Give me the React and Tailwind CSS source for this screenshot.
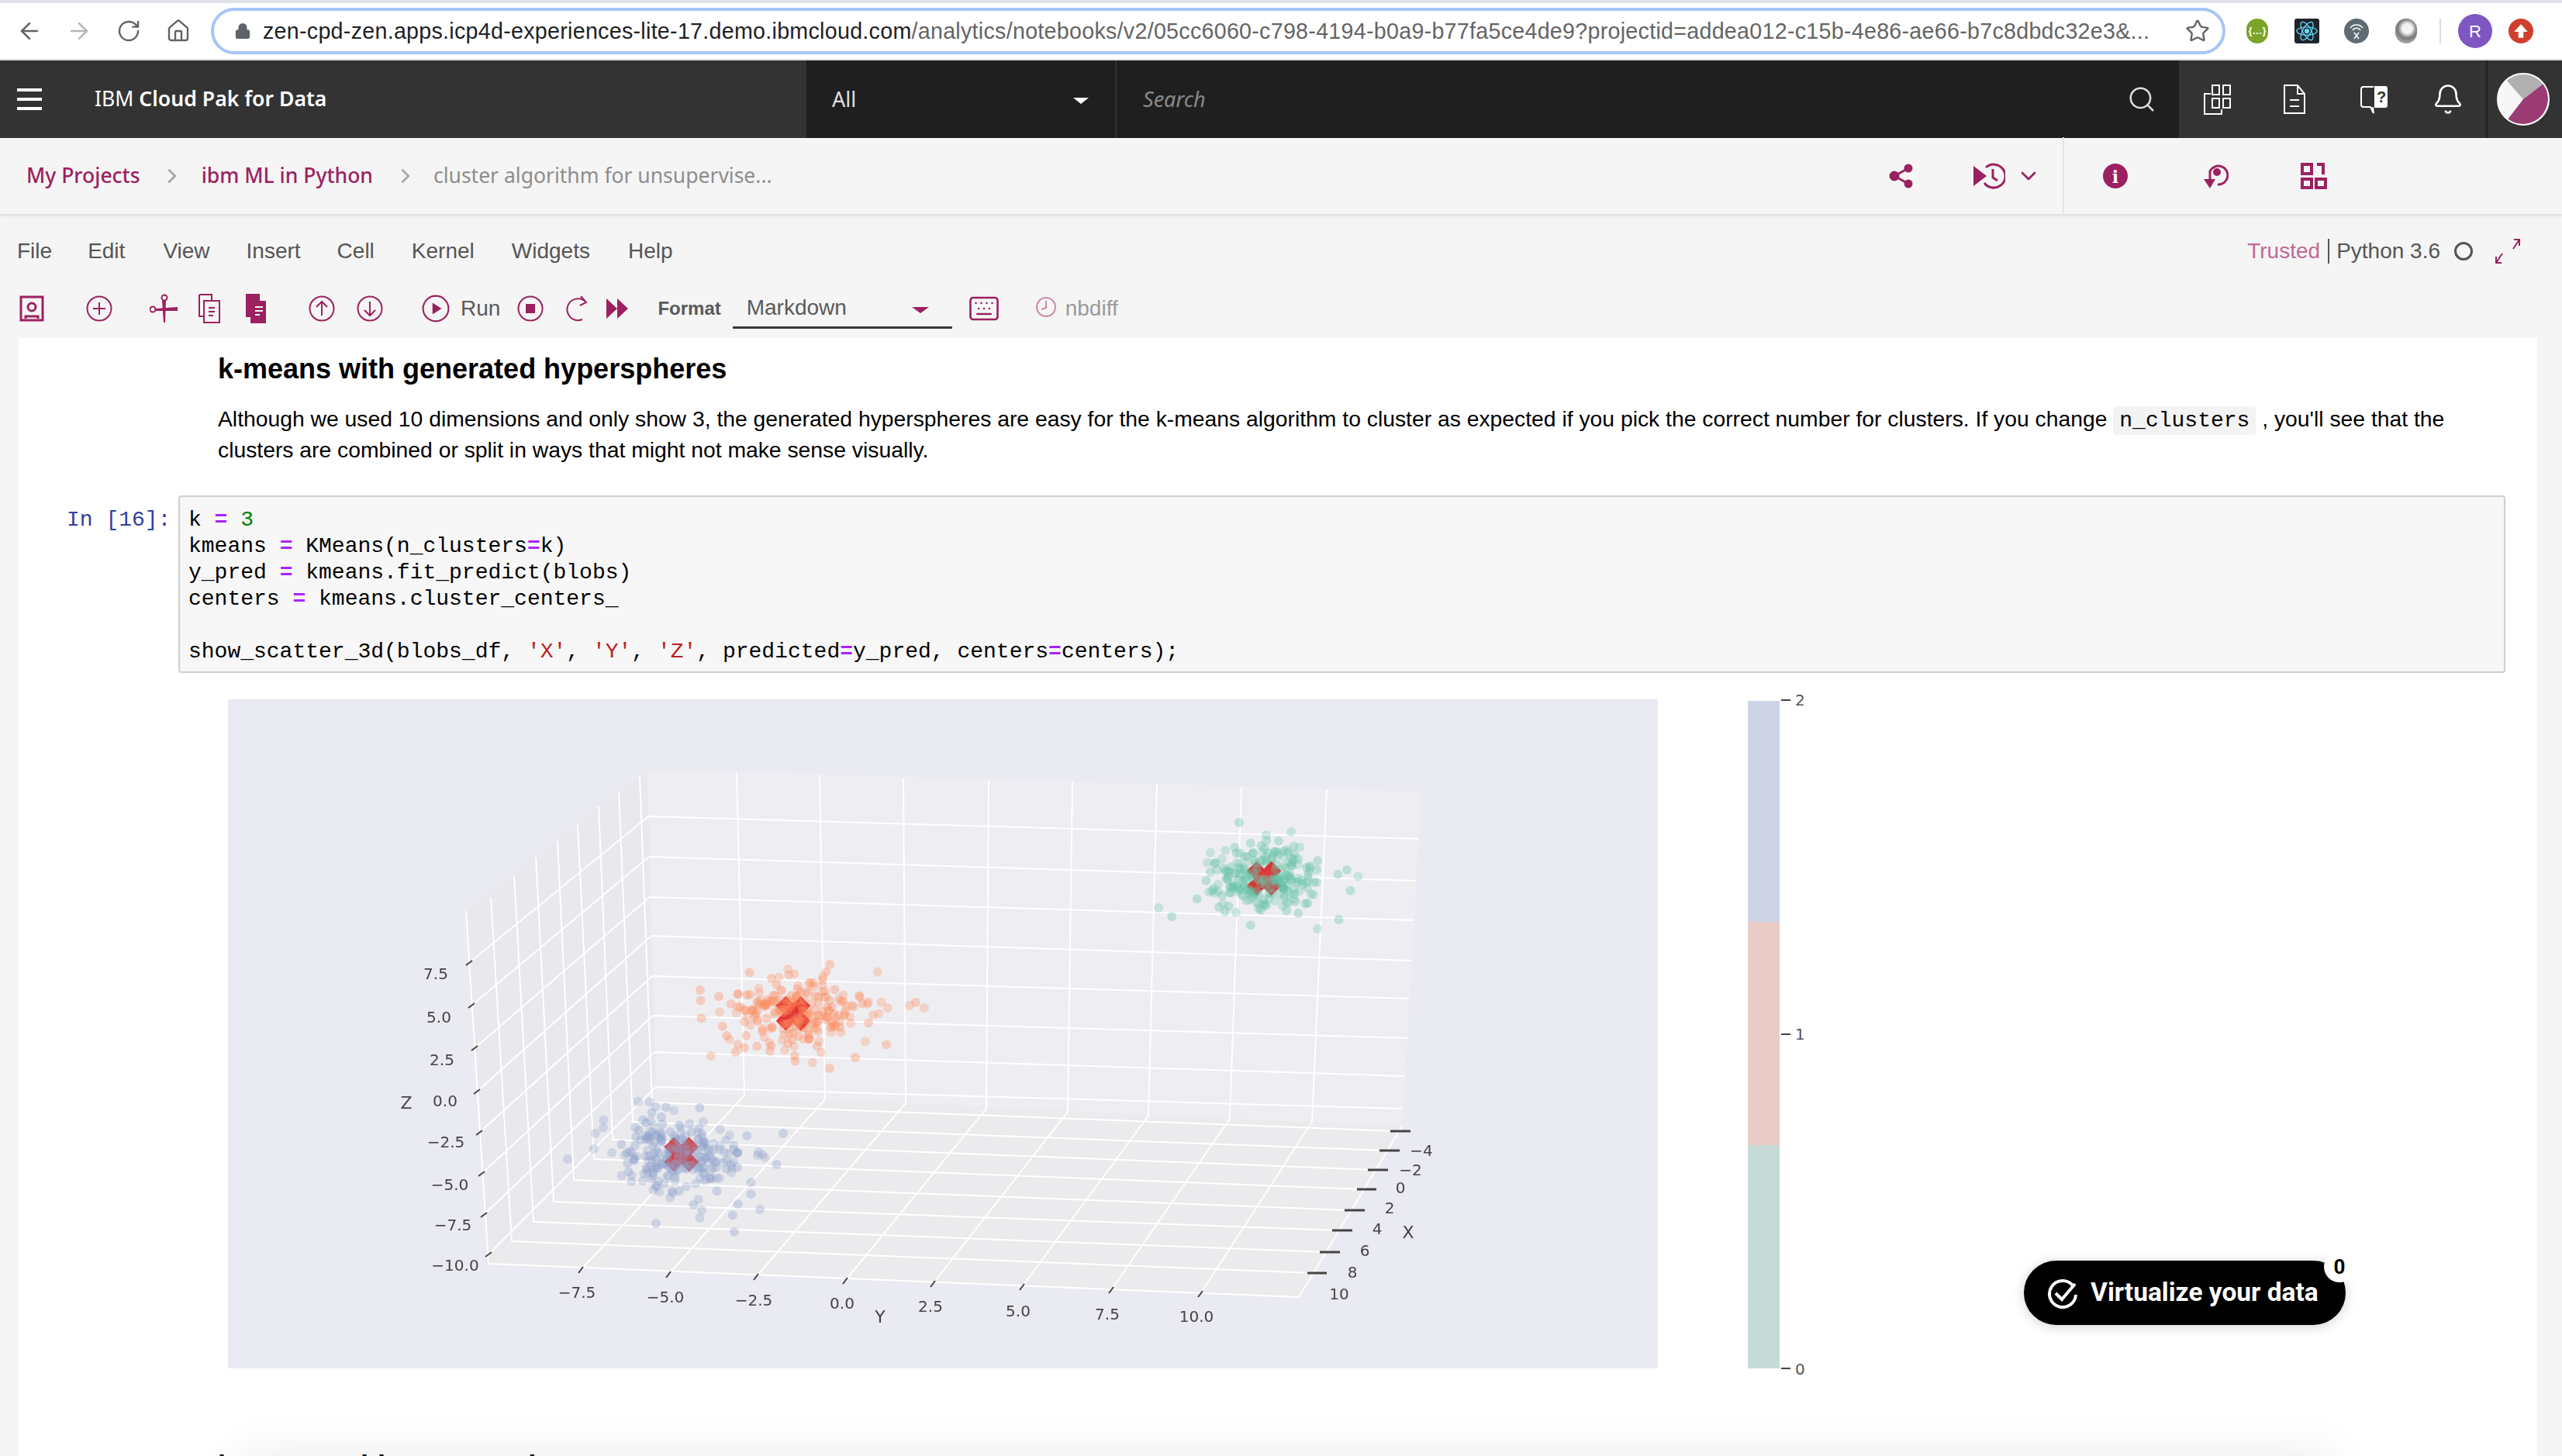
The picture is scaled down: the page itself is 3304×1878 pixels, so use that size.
import { ArrowLeft, ArrowRight, RotateCw, Home, Lock, Star, Search, Bell, ChevronRight, ChevronDown, Keyboard } from 'lucide-react'

// plot geometry, in page pixels
const wallHoriz = [
  [605, 1242, 836, 1053, 1829, 1082], [608, 1297, 837, 1105, 1825, 1136],
  [612, 1352, 838, 1157, 1822, 1187], [615, 1408, 840, 1207, 1820, 1239],
  [618, 1461, 841, 1259, 1817, 1288], [621, 1514, 842, 1310, 1815, 1339],
  [624, 1567, 844, 1357, 1811, 1388], [630, 1618, 846, 1402, 1808, 1430],
]
const leftVert = [
  [825, 1001, 841, 1422], [798, 1021, 816, 1447], [772, 1040, 790, 1470], [745, 1063, 766, 1495],
  [719, 1085, 740, 1522], [691, 1106, 714, 1550], [663, 1129, 688, 1576], [633, 1158, 660, 1601],
]
const floorX = [
  [1803, 1459], [1787, 1484], [1772, 1509], [1756, 1534], [1741, 1561], [1726, 1587], [1710, 1615], [1694, 1642],
]
const backVert = [
  [950, 997, 960, 1413, 749, 1638], [1057, 1000, 1064, 1418, 862, 1644], [1165, 1003, 1168, 1423, 975, 1647],
  [1275, 1006, 1272, 1430, 1090, 1652], [1383, 1009, 1377, 1434, 1203, 1656], [1492, 1012, 1481, 1439, 1318, 1660],
  [1601, 1015, 1586, 1443, 1433, 1664], [1711, 1018, 1692, 1447, 1548, 1669],
]
const zLabels = [['7.5', 562, 1256], ['5.0', 566, 1312], ['2.5', 570, 1367], ['0.0', 574, 1420], ['−2.5', 575, 1473], ['−5.0', 580, 1528], ['−7.5', 584, 1580], ['−10.0', 587, 1632]]
const yLabels = [['−7.5', 744, 1667], ['−5.0', 858, 1673], ['−2.5', 972, 1677], ['0.0', 1086, 1681], ['2.5', 1200, 1685], ['5.0', 1313, 1691], ['7.5', 1428, 1695], ['10.0', 1543, 1698]]
const xLabels = [['−4', 1833, 1484], ['−2', 1819, 1509], ['0', 1806, 1532], ['2', 1792, 1558], ['4', 1776, 1585], ['6', 1760, 1613], ['8', 1744, 1641], ['10', 1727, 1669]]
const xTicks = [[1793, 1819, 1459], [1779, 1805, 1484], [1764, 1790, 1509], [1750, 1775, 1534], [1734, 1760, 1561], [1718, 1744, 1587], [1702, 1728, 1615], [1686, 1711, 1642]]

function cloud(seed, n, cx, cy, sx, sy) {
  let s = seed
  const rnd = () => {
    s = (s * 1664525 + 1013904223) % 4294967296
    return s / 4294967296
  }
  const pts = []
  for (let i = 0; i < n; i++) {
    const r = Math.sqrt(-2 * Math.log(rnd() + 0.0001))
    const t = rnd() * Math.PI * 2
    pts.push([cx + Math.cos(t) * r * sx, cy + Math.sin(t) * r * sy])
  }
  return pts
}

const clusters = [
  { color: '#8da0cb', c: [879, 1489], pts: [...cloud(11, 240, 879, 1489, 45, 28), [732, 1495], [1010, 1462], [980, 1560], [846, 1578]] },
  { color: '#fc8d62', c: [1023, 1307], pts: [...cloud(29, 240, 1023, 1307, 46, 26), [1173, 1297], [1181, 1293], [1192, 1300], [1103, 1364], [917, 1362]] },
  { color: '#66c2a5', c: [1630, 1133], pts: [...cloud(47, 240, 1630, 1133, 38, 24), [1494, 1171], [1598, 1061], [1665, 1073], [1737, 1122], [1699, 1198]] },
]

function Scatter() {
  return (
    <svg viewBox="294 902 1844 863" className="w-[1844px] h-[863px] shrink-0 blur-[0.6px]">
      <rect x="294" y="902" width="1844" height="863" fill="#eaeaf2" />
      <polygon points="601,1175 835,993 846,1408 630,1630" fill="#e8e8ed" />
      <polygon points="835,993 1833,1021 1808,1453 846,1408" fill="#eeeef2" />
      <polygon points="846,1408 1808,1453 1675,1673 630,1630" fill="#ebebee" />
      <g stroke="#ffffff" strokeWidth="2" fill="none">
        <path d="M601 1175 L630 1630 L1675 1673 L1808 1453" />
        {wallHoriz.map((l, i) => <path key={i} d={`M${l[0]} ${l[1]} L${l[2]} ${l[3]} L${l[4]} ${l[5]}`} />)}
        {leftVert.map((l, i) => <line key={i} x1={l[0]} y1={l[1]} x2={l[2]} y2={l[3]} />)}
        {leftVert.map((l, i) => <line key={i} x1={l[2]} y1={l[3]} x2={floorX[i][0]} y2={floorX[i][1]} />)}
        {backVert.map((l, i) => <path key={i} d={`M${l[0]} ${l[1]} L${l[2]} ${l[3]} L${l[4]} ${l[5]}`} />)}
      </g>
      <g stroke="#444444" strokeWidth="2">
        {wallHoriz.map((l, i) => <line key={i} x1={l[0] - 4} y1={l[1] + 3} x2={l[0] + 4} y2={l[1] - 3} />)}
        {backVert.map((l, i) => <line key={i} x1={l[4] - 3} y1={l[5] + 4} x2={l[4] + 3} y2={l[5] - 4} />)}
        {xTicks.map((t, i) => <line key={i} x1={t[0]} y1={t[2]} x2={t[1]} y2={t[2]} strokeWidth="3" />)}
      </g>
      {clusters.map((cl, i) => (
        <g key={i}>
          <g fill={cl.color} fillOpacity="0.3">
            {cl.pts.filter((_, j) => j % 2 === 0).map((p, j) => <circle key={j} cx={p[0]} cy={p[1]} r="6" />)}
          </g>
          <g stroke="#e01b1b" strokeOpacity="0.85" strokeWidth="18">
            <path d={`M${cl.c[0] - 16} ${cl.c[1] - 16} L${cl.c[0] + 16} ${cl.c[1] + 16} M${cl.c[0] - 16} ${cl.c[1] + 16} L${cl.c[0] + 16} ${cl.c[1] - 16}`} />
          </g>
          <g fill={cl.color} fillOpacity="0.36">
            {cl.pts.filter((_, j) => j % 2 === 1).map((p, j) => <circle key={j} cx={p[0]} cy={p[1]} r="6" />)}
          </g>
        </g>
      ))}
      <g fill="#444444" fontSize="20" fontFamily="'DejaVu Sans', sans-serif" textAnchor="middle" dominantBaseline="central">
        {[...zLabels, ...yLabels, ...xLabels].map(([t, x, y]) => <text key={t + x} x={x} y={y}>{t}</text>)}
        <text x="524" y="1422" fontSize="22">Z</text>
        <text x="1135" y="1698" fontSize="22">Y</text>
        <text x="1816" y="1589" fontSize="22">X</text>
      </g>
    </svg>
  )
}

function ColorBar() {
  return (
    <svg viewBox="2254 902 80 863" className="w-[80px] h-[863px] shrink-0 ml-[116px] overflow-visible">
      <rect x="2254" y="904" width="41" height="285" fill="#ced3e6" />
      <rect x="2254" y="1189" width="41" height="288" fill="#eaccc6" />
      <rect x="2254" y="1477" width="41" height="288" fill="#c7dbd8" />
      <g stroke="#444444" strokeWidth="2">
        <line x1="2297" x2="2309" y1="903" y2="903" />
        <line x1="2297" x2="2309" y1="1334" y2="1334" />
        <line x1="2297" x2="2309" y1="1765" y2="1765" />
      </g>
      <g fill="#555555" fontSize="20" fontFamily="'DejaVu Sans', sans-serif" dominantBaseline="central">
        <text x="2315" y="903">2</text>
        <text x="2315" y="1334">1</text>
        <text x="2315" y="1766">0</text>
      </g>
    </svg>
  )
}

function Ic({ x, s = 34, children, vb = '0 0 34 34', className = '' }) {
  return (
    <svg viewBox={vb} width={s} height={s} fill="none" stroke="currentColor" strokeWidth="2" className={`shrink-0 ${className}`} style={{ marginLeft: x }}>
      {children}
    </svg>
  )
}

function Ring({ x, children }) {
  return (
    <Ic x={x}>
      <circle cx="17" cy="17" r="15.5" />
      {children}
    </Ic>
  )
}

function TopIcons() {
  return (
    <div className="flex items-center text-white">
      <Ic x={0} s={40} vb="0 0 40 40">
        <path d="M12 13H4v26h22v-6" />
        <rect x="14" y="2" width="9" height="12" /><rect x="28" y="2" width="9" height="12" />
        <rect x="14" y="19" width="9" height="12" /><rect x="28" y="19" width="9" height="12" />
      </Ic>
      <Ic x={60} s={40} vb="0 0 40 40">
        <path d="M7 2h17l9 11v25H7zM24 2v11h9M14 21h12M14 29h12" />
      </Ic>
      <Ic x={62} s={40} vb="0 0 40 40">
        <path d="M20 4H7a3 3 0 0 0-3 3v20a3 3 0 0 0 3 3h9l4 8-1-8" />
        <path d="M22 4h13a2 2 0 0 1 2 2v22a2 2 0 0 1-2 2H22z" fill="currentColor" />
        <text x="30" y="24" fontSize="20" fontWeight="700" fill="#333333" stroke="none" textAnchor="middle" fontFamily="'Liberation Sans', sans-serif">?</text>
      </Ic>
      <Bell size={42} strokeWidth={1.5} className="ml-[55px]" />
    </div>
  )
}

function ChromeExtras() {
  return (
    <div className="flex items-center ml-[27px]">
      <div className="w-[28px] h-[32px] rounded-full bg-[#7ba428] text-white text-[13px] flex items-center justify-center font-['Liberation_Sans',sans-serif] font-bold">{'{…}'}</div>
      <div className="w-[32px] h-[32px] ml-[34px] bg-[#20232a] rounded-[3px] flex items-center justify-center">
        <svg viewBox="-12 -12 24 24" width="30" height="30" fill="none" stroke="#61dafb" strokeWidth="1">
          <circle r="2" fill="#61dafb" />
          <ellipse rx="10.5" ry="4.2" />
          <ellipse rx="10.5" ry="4.2" transform="rotate(60)" />
          <ellipse rx="10.5" ry="4.2" transform="rotate(120)" />
        </svg>
      </div>
      <svg viewBox="0 0 32 32" width="32" height="32" className="ml-[32px]">
        <circle cx="16" cy="16" r="16" fill="#5f6b73" />
        <path d="M8 12a10 10 0 0 1 16 0M11 15a6 6 0 0 1 10 0M13 18l6 8M19 18l-6 8" stroke="#ffffff" strokeWidth="1.5" fill="none" />
      </svg>
      <div className="w-[28px] h-[32px] ml-[34px] rounded-full bg-[radial-gradient(circle_at_55%_40%,#f4f4f4_0%,#f4f4f4_25%,#7a7a7a_50%,#c8c8c8_100%)]" />
      <div className="w-[2px] h-[32px] bg-[#dadce0] ml-[29px]" />
      <div className="w-[44px] h-[44px] ml-[22px] rounded-full bg-[#7e57c2] text-white text-[22px] flex items-center justify-center font-['Liberation_Sans',sans-serif]">R</div>
      <div className="w-[32px] h-[32px] ml-[21px] rounded-full bg-[#cf3f2d] flex items-center justify-center">
        <svg viewBox="0 0 20 20" width="22" height="22"><path d="M10 2l8 9h-5v7H7v-7H2z" fill="#ffffff" /></svg>
      </div>
    </div>
  )
}

function MagentaIcons() {
  return (
    <div className="flex items-center text-[#9c2160] ml-auto">
      <svg viewBox="0 0 34 34" width="34" height="34" fill="currentColor" stroke="currentColor" strokeWidth="3">
        <line x1="26" y1="7" x2="8" y2="17" /><line x1="8" y1="17" x2="26" y2="27" />
        <circle cx="26" cy="7" r="4" /><circle cx="8" cy="17" r="5" /><circle cx="26" cy="27" r="4" />
      </svg>
      <svg viewBox="0 0 42 36" width="42" height="36" className="ml-[75px]" fill="none" stroke="currentColor" strokeWidth="3">
        <path d="M1 5l17 13L1 31z" fill="currentColor" stroke="none" />
        <path d="M17 7a15 15 0 1 1-2 20M26 9v11l6 4" />
      </svg>
      <ChevronDown size={32} strokeWidth={2} className="ml-[14px]" />
      <div className="w-[2px] h-[100px] bg-[#e4e4e4] ml-[28px]" />
      <svg viewBox="0 0 34 34" width="34" height="34" className="ml-[49px]">
        <circle cx="17" cy="17" r="16" fill="currentColor" />
        <text x="17" y="26" textAnchor="middle" fontSize="22" fontWeight="700" fill="#ffffff" fontFamily="'DejaVu Serif', serif">i</text>
      </svg>
      <svg viewBox="0 0 34 36" width="34" height="36" className="ml-[95px]" fill="none" stroke="currentColor" strokeWidth="3">
        <path d="M10 24V12a12 12 0 1 1 10 17" />
        <circle cx="19" cy="13" r="5" fill="currentColor" stroke="none" />
        <path d="M2 22h15l-7 12z" fill="currentColor" stroke="none" />
      </svg>
      <svg viewBox="0 0 34 34" width="34" height="34" className="ml-[93px]" fill="none" stroke="currentColor" strokeWidth="4">
        <rect x="2" y="2" width="12" height="12" /><path d="M21 2h8v13" />
        <rect x="2" y="21" width="12" height="11" /><rect x="20" y="21" width="12" height="11" />
      </svg>
      <div className="w-[303px]" />
    </div>
  )
}

function Toolbar() {
  return (
    <div className="h-[66px] shrink-0 flex items-center text-[#9c2160] pl-[25px] pb-[10px] font-['Liberation_Sans',sans-serif]">
      <svg viewBox="0 0 32 34" width="32" height="34" fill="none" stroke="currentColor" strokeWidth="3">
        <rect x="2" y="2" width="28" height="30" /><circle cx="16" cy="15" r="5" /><path d="M8 30v-3h16v3" />
      </svg>
      <Ring x={54}><path d="M17 9v16M9 17h16" /></Ring>
      <svg viewBox="0 0 38 38" width="38" height="38" fill="none" stroke="currentColor" strokeWidth="2" className="ml-[48px]">
        <circle cx="19" cy="5" r="3.5" /><circle cx="4" cy="20" r="3.5" />
        <path d="M8 19l28-2v5H8z" fill="currentColor" stroke="none" />
        <path d="M16 9h5l-1 28h-2z" fill="currentColor" stroke="none" />
      </svg>
      <Ic x={24} s={30} vb="0 0 30 38" className="h-[38px]">
        <path d="M2 1h16v8M2 1v28h6M8 9h20v28H8zM14 18h8M14 23h8M14 28h6" />
      </Ic>
      <svg viewBox="0 0 30 38" width="30" height="38" className="ml-[30px]" fill="currentColor">
        <path d="M2 0h18v9h8v29H8v-8H2z" /><path d="M14 17h10M14 22h10M14 27h6" stroke="#f5f5f5" strokeWidth="2" />
      </svg>
      <Ring x={53}><path d="M17 26V9M10 15l7-7 7 7" /></Ring>
      <Ring x={28}><path d="M17 8v17M10 19l7 7 7-7" /></Ring>
      <Ic x={50} s={36} vb="0 0 34 34">
        <circle cx="17" cy="17" r="15.5" /><path d="M13 10l11 7-11 7z" fill="currentColor" stroke="none" />
      </Ic>
      <span className="text-[28px] text-[#5a5a5a] ml-[14px]">Run</span>
      <Ring x={22}><rect x="11" y="11" width="12" height="12" fill="currentColor" stroke="none" /></Ring>
      <Ic x={28}><path d="M27 9a14 14 0 1 0-5 22M20 1l7 8-8 4" /></Ic>
      <svg viewBox="0 0 30 30" width="30" height="30" className="ml-[18px]" fill="currentColor"><path d="M1 2l14 13L1 28zM15 2l14 13-14 13z" /></svg>
      <span className="text-[24px] font-bold text-[#5a5a5a] ml-[37px]">Format</span>
      <div className="w-[283px] h-[52px] ml-[15px] border-b-[3px] border-[#3a3a3a] flex items-center justify-between pl-[18px] pr-[30px] text-[#5a5a5a] text-[28px]">
        <span>Markdown</span>
        <span className="w-0 h-0 border-x-[11px] border-x-transparent border-t-[8px] border-t-[#9c2160] mt-[6px]" />
      </div>
      <Keyboard size={42} strokeWidth={1.5} className="ml-[20px]" />
      <svg viewBox="0 0 28 28" width="28" height="28" fill="none" stroke="#c98aa8" strokeWidth="2" className="ml-[45px] -mt-[4px]">
        <circle cx="14" cy="14" r="12" /><path d="M14 6v9l-6 2" />
      </svg>
      <span className="text-[28px] text-[#9a9a9a] ml-[11px]">nbdiff</span>
    </div>
  )
}

export default function App() {
  return (
    <div className="relative w-[3304px] h-[1878px] overflow-hidden bg-[#f5f5f5] flex flex-col font-['Liberation_Sans',sans-serif]">
      {/* browser chrome */}
      <div className="h-[78px] shrink-0 bg-white border-t-[4px] border-b-[2px] border-t-[#dee1e6] border-b-[#dadce0] flex items-center pl-[21px] text-[#5f6368]">
        <ArrowLeft size={34} strokeWidth={1.8} />
        <ArrowRight size={34} strokeWidth={1.8} className="ml-[30px] text-[#b4b6b9]" />
        <RotateCw size={32} strokeWidth={1.8} className="ml-[31px]" />
        <Home size={32} strokeWidth={1.8} className="ml-[32px]" />
        <div className="w-[2598px] h-[60px] ml-[26px] shrink-0 border-[4px] border-[#a6c6f7] rounded-full flex items-center pl-[26px] pr-[16px]">
          <Lock size={22} fill="#5f6368" className="shrink-0" />
          <div className="ml-[15px] text-[28.6px] tracking-[0.3px] whitespace-nowrap overflow-hidden flex-1 text-[#646464]">
            <span className="text-[#202124]">zen-cpd-zen.apps.icp4d-experiences-lite-17.demo.ibmcloud.com</span>/analytics/notebooks/v2/05cc6060-c798-4194-b0a9-b77fa5ce4de9?projectid=addea012-c15b-4e86-ae66-b7c8dbdc32e3&amp;...
          </div>
          <Star size={32} strokeWidth={1.8} className="shrink-0 text-[#5f6368] ml-[14px]" />
        </div>
        <ChromeExtras />
      </div>

      {/* platform header */}
      <div className="h-[100px] shrink-0 bg-[#333333] flex items-stretch text-white">
        <div className="w-[1040px] flex items-center pl-[22px]">
          <div className="w-[32px] flex flex-col gap-[8px]">
            <div className="h-[4px] bg-white" /><div className="h-[4px] bg-white" /><div className="h-[4px] bg-white" />
          </div>
          <div className="ml-[68px] text-[26.6px] font-['Noto_Sans',sans-serif] whitespace-nowrap">IBM <span className="font-semibold">Cloud Pak for Data</span></div>
        </div>
        <div className="w-[1770px] bg-[#1f1f1f] flex items-center">
          <div className="w-[400px] h-full flex items-center justify-between pl-[33px] pr-[34px] border-r-[2px] border-[#333333] text-[27px] text-[#e0e0e0] font-['Noto_Sans',sans-serif]">
            <span>All</span>
            <span className="w-0 h-0 border-x-[10px] border-x-transparent border-t-[8px] border-t-white mt-[4px]" />
          </div>
          <span className="ml-[34px] text-[27px] italic text-[#8a8a8a] font-['Noto_Sans',sans-serif]">Search</span>
          <Search size={38} strokeWidth={1.6} className="ml-auto mr-[29px] text-[#dddddd]" />
        </div>
        <div className="flex-1 flex items-center pl-[29px]">
          <TopIcons />
          <div className="w-[2px] h-full bg-[#1f1f1f] ml-[28px]" />
          <svg viewBox="0 0 68 68" width="68" height="68" className="ml-[12px] shrink-0">
            <circle cx="34" cy="34" r="33" fill="#f7f7f7" />
            <path d="M34 34L12 9A33 33 0 0 1 60 14z" fill="#b0b0b0" />
            <path d="M34 34L60 14A33 33 0 0 1 14 60z" fill="#9b3c74" />
            <circle cx="34" cy="34" r="33" fill="none" stroke="#ffffff" strokeWidth="2" />
          </svg>
        </div>
      </div>

      {/* breadcrumb */}
      <div className="h-[100px] shrink-0 flex items-center pl-[34px] border-b-[2px] border-[#e2e2e2] shadow-[0_2px_4px_rgba(0,0,0,0.05)] text-[26.5px] text-[#9c2160] font-['Noto_Sans',sans-serif]">
        <span className="font-medium">My Projects</span>
        <ChevronRight size={30} strokeWidth={2.4} className="ml-[26px] text-[#a8a8a8]" />
        <span className="ml-[23px] font-medium">ibm ML in Python</span>
        <ChevronRight size={30} strokeWidth={2.4} className="ml-[27px] text-[#a8a8a8]" />
        <span className="ml-[21px] text-[#8d8d8d]">cluster algorithm for unsupervise...</span>
        <MagentaIcons />
      </div>

      {/* notebook menu */}
      <div className="h-[92px] shrink-0 flex items-center pl-[22px] text-[28px] text-[#555555]">
        <span>File</span>
        <span className="ml-[46px]">Edit</span>
        <span className="ml-[49px]">View</span>
        <span className="ml-[47px]">Insert</span>
        <span className="ml-[47px]">Cell</span>
        <span className="ml-[48px]">Kernel</span>
        <span className="ml-[48px]">Widgets</span>
        <span className="ml-[49px]">Help</span>
        <div className="ml-auto flex items-center pr-[53px]">
          <span className="text-[#c06b95]">Trusted</span>
          <div className="w-[2px] h-[32px] bg-[#555555] ml-[10px] mr-[9px]" />
          <span>Python 3.6</span>
          <div className="w-[24px] h-[24px] rounded-full border-[3px] border-[#555555] ml-[18px]" />
          <svg viewBox="0 0 34 34" width="34" height="34" fill="none" stroke="#9c2160" strokeWidth="2" className="ml-[28px]">
            <path d="M24 14L32 2M25 2h7v8M10 20L2 32M2 24v8h7" />
          </svg>
        </div>
      </div>

      <Toolbar />

      {/* notebook body */}
      <div className="ml-[24px] w-[3248px] flex-1 min-h-0 bg-white pt-[19px] pl-[257px]">
        <h2 className="text-[36px] leading-[42px] font-bold text-black">k-means with generated hyperspheres</h2>
        <p className="text-[28.3px] leading-[40px] text-black mt-[23px] w-[2900px]">
          Although we used 10 dimensions and only show 3, the generated hyperspheres are easy for the k-means algorithm to cluster as expected if you pick the correct number for clusters. If you change{' '}
          <code className="bg-[#f3f3f3] rounded-[4px] px-[8px] py-[3px] text-[28px] leading-none font-['Liberation_Mono',monospace]">n_clusters</code>
          {' '}, you'll see that the clusters are combined or split in ways that might not make sense visually.
        </p>

        <div className="flex mt-[39px] -ml-[196px]">
          <pre className="w-[145px] shrink-0 pl-[1px] pt-[15px] text-[28px] leading-[34px] text-[#303f9f] font-['Liberation_Mono',monospace]">In [16]:</pre>
          <pre className="w-[3001px] h-[229px] border-[2px] border-[#cfcfcf] rounded-[4px] bg-[#f7f7f7] pl-[11px] pt-[13px] text-[28px] leading-[34px] text-black font-['Liberation_Mono',monospace]">
            k <b className="text-[#aa22ff]">=</b> <span className="text-[#008000]">3</span>{'\n'}
            kmeans <b className="text-[#aa22ff]">=</b> KMeans(n_clusters<b className="text-[#aa22ff]">=</b>k){'\n'}
            y_pred <b className="text-[#aa22ff]">=</b> kmeans.fit_predict(blobs){'\n'}
            centers <b className="text-[#aa22ff]">=</b> kmeans.cluster_centers_{'\n'}
            {'\n'}
            show_scatter_3d(blobs_df, <span className="text-[#ba2121]">'X'</span>, <span className="text-[#ba2121]">'Y'</span>, <span className="text-[#ba2121]">'Z'</span>, predicted<b className="text-[#aa22ff]">=</b>y_pred, centers<b className="text-[#aa22ff]">=</b>centers);
          </pre>
        </div>

        <div className="flex mt-[34px] ml-[13px]">
          <Scatter />
          <ColorBar />
        </div>

        <h2 className="relative z-10 text-[36px] leading-[42px] font-bold text-black mt-[105px] whitespace-nowrap">k-means with generated</h2>
      </div>

      {/* shadow of the next panel, below the fold */}
      <div className="absolute left-[340px] top-[1905px] w-[2640px] h-[60px] bg-[#ececec] shadow-[0_0_60px_30px_rgba(236,236,236,1)]" />

      {/* floating action */}
      <div className="absolute left-[2610px] top-[1626px] w-[415px] h-[83px] rounded-full bg-black text-white flex items-center pl-[30px] shadow-[0_2px_16px_rgba(0,0,0,0.18)] font-['Roboto',sans-serif]">
        <svg viewBox="0 0 40 40" width="40" height="40" fill="none" stroke="#ffffff" strokeWidth="4">
          <path d="M33 10A17 17 0 1 0 37 22" /><path d="M11 20l8 8L36 8" />
        </svg>
        <span className="ml-[16px] text-[33.5px] font-bold whitespace-nowrap">Virtualize your data</span>
        <div className="absolute -right-[12px] -top-[12px] w-[40px] h-[40px] rounded-full bg-white text-black text-[26px] font-bold flex items-center justify-center">0</div>
      </div>
    </div>
  )
}
